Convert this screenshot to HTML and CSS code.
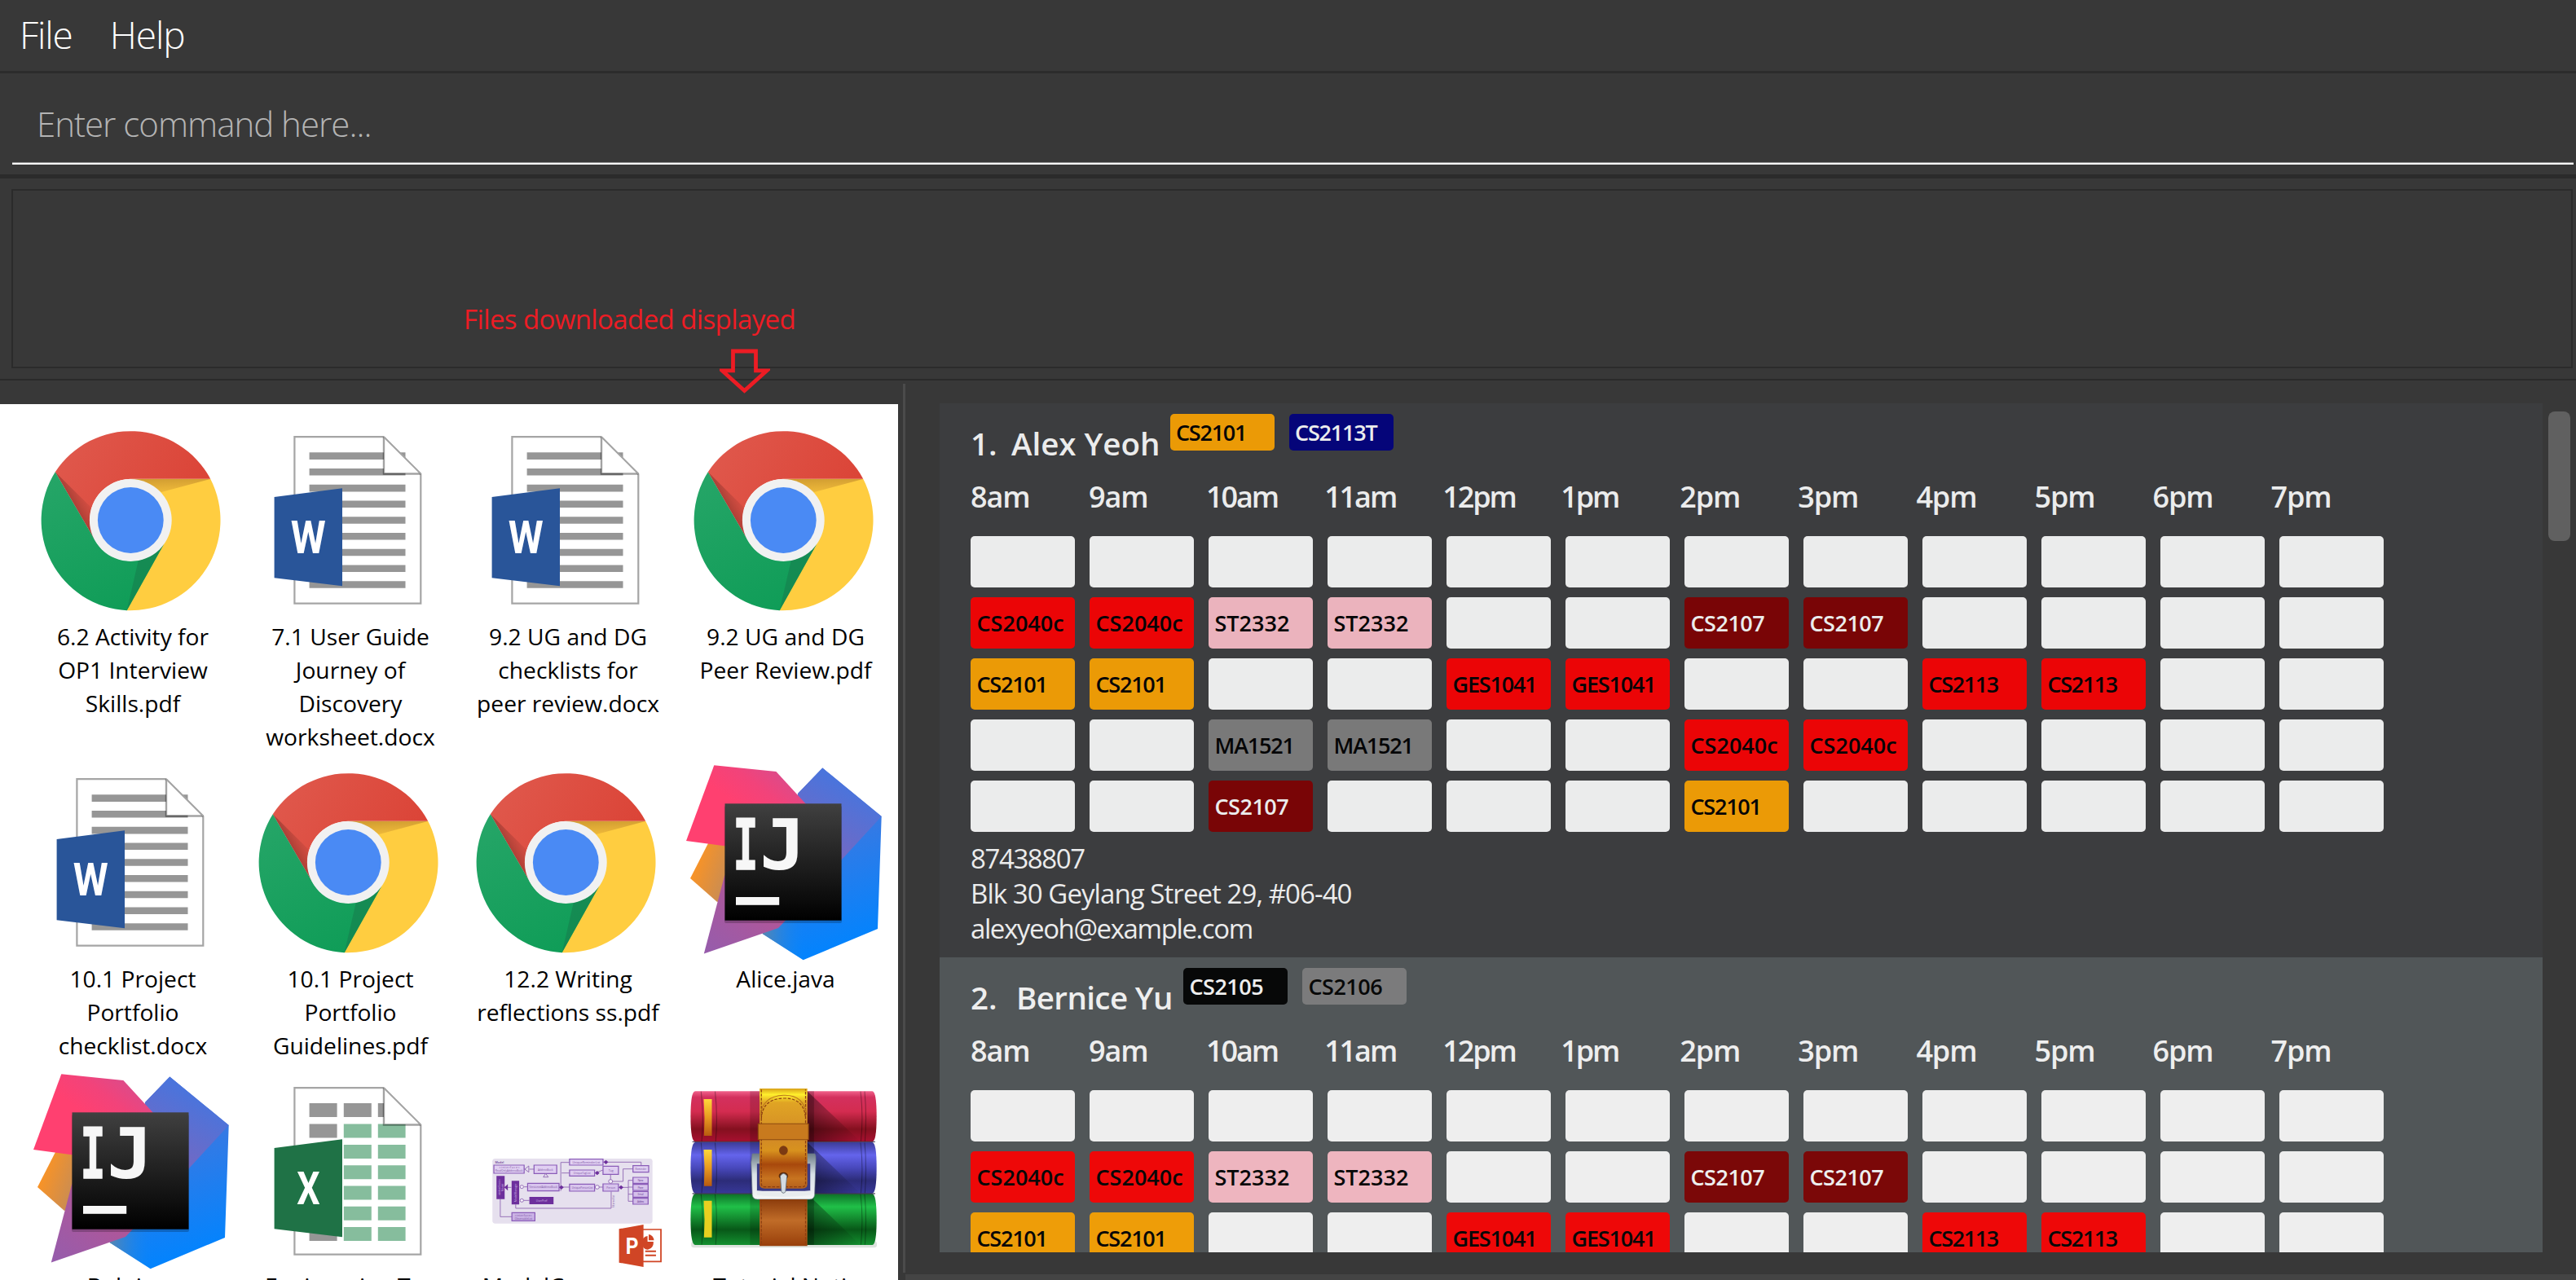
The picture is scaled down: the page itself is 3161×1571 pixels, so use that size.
FILE: index.html
```html
<!DOCTYPE html>
<html lang="en">
<head>
<meta charset="utf-8">
<title>Address Book</title>
<link rel="stylesheet" href="styles.css">
</head>
<body>
<svg class="defs" width="0" height="0" aria-hidden="true">
  <defs>
    <linearGradient id="cr-red" x1="0" y1="0" x2="1" y2="0.4"><stop offset="0" stop-color="#e05a4e"/><stop offset="1" stop-color="#db4437"/></linearGradient>
    <linearGradient id="cr-green" x1="0.2" y1="0" x2="0.6" y2="1"><stop offset="0" stop-color="#25a567"/><stop offset="1" stop-color="#109d58"/></linearGradient>
    <linearGradient id="cr-s1" x1="0" y1="0" x2="0.2" y2="1"><stop offset="0" stop-color="#bf8a2c" stop-opacity=".75"/><stop offset="1" stop-color="#e0a935" stop-opacity=".6"/></linearGradient>
    <linearGradient id="cr-s2" gradientUnits="userSpaceOnUse" x1="46" y1="102" x2="68" y2="90"><stop offset="0" stop-color="#7c2e26" stop-opacity=".65"/><stop offset="1" stop-color="#b5423a" stop-opacity=".15"/></linearGradient>
    <linearGradient id="ij-pink" x1="0.4" y1="0.5" x2="1" y2="0"><stop offset="0" stop-color="#ff4070"/><stop offset="0.35" stop-color="#f2437a"/><stop offset="1" stop-color="#c4539b"/></linearGradient>
    <linearGradient id="ij-blue" x1="0.3" y1="0" x2="0.5" y2="1"><stop offset="0" stop-color="#5670d4"/><stop offset="0.3" stop-color="#3d78e0"/><stop offset="1" stop-color="#0084ff"/></linearGradient>
    <linearGradient id="ij-violet" gradientUnits="userSpaceOnUse" x1="205" y1="30" x2="165" y2="100"><stop offset="0" stop-color="#4a74dc"/><stop offset="1" stop-color="#7169c4"/></linearGradient>
    <linearGradient id="ij-fade" gradientUnits="userSpaceOnUse" x1="93" y1="0" x2="146" y2="0"><stop offset="0" stop-color="#5a86ad"/><stop offset="1" stop-color="#0f86f6" stop-opacity="0"/></linearGradient>
    <linearGradient id="ij-orange" x1="0.2" y1="0" x2="1" y2="0.4"><stop offset="0" stop-color="#ff9420"/><stop offset="1" stop-color="#c78c55"/></linearGradient>
    <linearGradient id="ij-purple" x1="0.7" y1="0.3" x2="0.1" y2="1"><stop offset="0" stop-color="#b55595"/><stop offset="1" stop-color="#975cab"/></linearGradient>
    <linearGradient id="ij-black" x1="0" y1="0" x2="0" y2="1"><stop offset="0" stop-color="#404040"/><stop offset="1" stop-color="#000"/></linearGradient>
    <linearGradient id="rr-red" x1="0" y1="0" x2="0" y2="1"><stop offset="0" stop-color="#f0608a"/><stop offset="0.12" stop-color="#d3305e"/><stop offset="0.4" stop-color="#d42c50"/><stop offset="0.75" stop-color="#84101f"/><stop offset="1" stop-color="#a81030"/></linearGradient>
    <linearGradient id="rr-blue" x1="0" y1="0" x2="0" y2="1"><stop offset="0" stop-color="#3c3c98"/><stop offset="0.25" stop-color="#6464ec"/><stop offset="0.5" stop-color="#4848bc"/><stop offset="0.75" stop-color="#2c2c78"/><stop offset="1" stop-color="#383898"/></linearGradient>
    <linearGradient id="rr-green" x1="0" y1="0" x2="0" y2="1"><stop offset="0" stop-color="#0e7028"/><stop offset="0.25" stop-color="#20c048"/><stop offset="0.7" stop-color="#085818"/><stop offset="1" stop-color="#149030"/></linearGradient>
    <linearGradient id="rr-gold" x1="0" y1="0" x2="0" y2="1"><stop offset="0" stop-color="#ffd83a"/><stop offset="0.5" stop-color="#e89a20"/><stop offset="1" stop-color="#b85a10"/></linearGradient>
    <linearGradient id="rr-strap" x1="0" y1="0" x2="0" y2="1"><stop offset="0" stop-color="#d8a018"/><stop offset="0.06" stop-color="#fff02c"/><stop offset="0.14" stop-color="#e0a424"/><stop offset="0.5" stop-color="#d28a26"/><stop offset="0.62" stop-color="#d8921e"/><stop offset="0.76" stop-color="#a8480c"/><stop offset="0.9" stop-color="#c87420"/><stop offset="1" stop-color="#b4601c"/></linearGradient>
    <linearGradient id="rr-tail" x1="0" y1="0" x2="0" y2="1"><stop offset="0" stop-color="#8c3c0c"/><stop offset="0.45" stop-color="#c06c28"/><stop offset="1" stop-color="#983f0a"/></linearGradient>
    <linearGradient id="rr-shade" x1="0" y1="0" x2="1" y2="0"><stop offset="0" stop-color="#000" stop-opacity=".6"/><stop offset="1" stop-color="#000" stop-opacity="0"/></linearGradient>
    <linearGradient id="rr-metal" x1="0" y1="0" x2="0" y2="1"><stop offset="0" stop-color="#6c7c88"/><stop offset="0.45" stop-color="#d8e0e6"/><stop offset="1" stop-color="#f6f6f6"/></linearGradient>
    <linearGradient id="pp-box" x1="0" y1="0" x2="0" y2="1"><stop offset="0" stop-color="#e4d4f4"/><stop offset="1" stop-color="#c8b0e4"/></linearGradient>

    <symbol id="chrome" viewBox="0 0 240 240">
      <path d="M217.2 68.7A110.8 110.8 0 0 1 114.7 230.2L119.3 119.5V68.7Z" fill="#ffcd40"/>
      <path d="M26.8 60.3A110.8 110.8 0 0 1 217.2 68.7H119.3A50.6 50.6 0 0 0 75 143Z" fill="url(#cr-red)"/>
      <path d="M26.8 60.3L75 143A50.6 50.6 0 0 0 160 149L114.7 230.2A110.8 110.8 0 0 1 26.8 60.3Z" fill="url(#cr-green)"/>
      <path d="M119.3 69H217L157 85Z" fill="url(#cr-s1)"/>
      <path d="M26.8 60.3L75 143L70 103Z" fill="url(#cr-s2)"/>
      <path d="M160 149L114.7 230L129 168Z" fill="#158450" opacity=".75"/>
      <circle cx="119.3" cy="119.5" r="50.4" fill="#f1f1f1"/>
      <circle cx="119.3" cy="119.5" r="40.4" fill="#4a8af4"/>
    </symbol>

    <symbol id="page" viewBox="0 0 240 240">
      <path d="M53.4 17.2H162.5L208.3 63V221.6H53.4Z" fill="#fff" stroke="#a5a5a5" stroke-width="2.2"/>
    </symbol>
    <symbol id="fold" viewBox="0 0 240 240">
      <path d="M163 18V61.8H207Z" fill="#fff"/>
      <path d="M163 17.2V62.5H208.3" fill="none" stroke="#000" stroke-opacity=".36" stroke-width="2.4"/>
      <path d="M163 17.2L208.3 62.5" stroke="#a5a5a5" stroke-width="2"/>
    </symbol>

    <symbol id="word" viewBox="0 0 240 240">
      <use href="#page"/>
      <path d="M71.6 40.6H189.5M71.6 60.3H189.5M71.6 80.1H189.5M71.6 99.8H189.5M71.6 119.5H189.5M71.6 139.2H189.5M71.6 159H189.5M71.6 178.7H189.5M71.6 198.5H189.5" stroke="#969696" stroke-width="8.6"/>
      <use href="#fold"/>
      <path d="M28.6 91L112 80.2V200.3L28.6 190.2Z" fill="#295599"/>
      <text x="48.8" y="160.3" class="badge" textLength="43" lengthAdjust="spacingAndGlyphs">W</text>
    </symbol>

    <symbol id="excel" viewBox="0 0 240 240">
      <use href="#page"/>
      <path d="M71.6 44.5H105.6M113.8 44.5H147.8M155.8 44.5H163M71.6 70H105.6M71.6 196.5H105.6" stroke="#969696" stroke-width="17"/>
      <path d="M113.8 70H147.8M155.8 70H189.6M113.8 95.4H147.8M155.8 95.4H189.6M113.8 120.7H147.8M155.8 120.7H189.6M113.8 146H147.8M155.8 146H189.6M113.8 171.3H147.8M155.8 171.3H189.6M113.8 196.5H147.8M155.8 196.5H189.6" stroke="#86bd9d" stroke-width="17"/>
      <use href="#fold"/>
      <path d="M28.6 91L112 80.2V200.3L28.6 190.2Z" fill="#1f7246"/>
      <text x="56.2" y="160.3" class="badge" textLength="28.4" lengthAdjust="spacingAndGlyphs">X</text>
    </symbol>

    <symbol id="intellij" viewBox="0 0 240 240">
      <path d="M27 96L5 139L38 168L60 160V90Z" fill="url(#ij-orange)"/>
      <path d="M167.3 3.5L239.7 63L235 201L143.6 239.2L93.6 207L120 120L137 35Z" fill="url(#ij-blue)"/>
      <path d="M93.6 207L143.6 239.2V180H110Z" fill="url(#ij-fade)"/>
      <path d="M167.3 3.5L239.7 63L190 117L137 90V35Z" fill="url(#ij-violet)"/>
      <path d="M47 136L21.8 231.5L113 200L135 177L60 120Z" fill="url(#ij-purple)"/>
      <path d="M34.3 .2L110.4 8L160 62L60 101L0 93Z" fill="url(#ij-pink)"/>
      <rect x="47" y="50" width="144" height="144" rx="2" fill="#000" opacity=".22"/>
      <rect x="47.5" y="47.3" width="143" height="143.4" fill="url(#ij-black)"/>
      <text x="57.5" y="128.3" class="mono mono-bold" textLength="31" lengthAdjust="spacingAndGlyphs">I</text>
      <text x="90" y="128.3" class="mono" textLength="57" lengthAdjust="spacingAndGlyphs">J</text>
      <rect x="61" y="162" width="53.2" height="9.8" fill="#f7f7f7"/>
    </symbol>

    <symbol id="slides" viewBox="0 0 240 240">
      <g transform="translate(-15.4 -18) scale(.35714 .33333)">
        <rect x="125" y="366" width="550" height="239" rx="10" fill="#e6e0ee"/>
        <g fill="none" stroke="#8a60b0" stroke-width="2.5">
          <path d="M252 405H268M308 390V432M234 470H246M354 471H390M360 485V380H390M363 419H390M478 471H505M560 472H592M505 379H636V390M478 419L505 408M531 425V450M531 450H574V404H608M205 535V549H533V487M152 515V580H192M224 520H252M592 446V523M592 446H608M592 471H608M592 497H608M592 523H608M165 472H190"/>
        </g>
        <g fill="url(#pp-box)" stroke="#8a5cb8" stroke-width="3.5">
          <path d="M130 390H234V420H130ZM268 390H346V421H268ZM390 368H505V390H390ZM390 408H476V430H390ZM505 394H558V424H505ZM608 392H662V416H608ZM246 457H354V485H246ZM390 460H476V486H390ZM505 459H558V486H505ZM608 435H660V457H608ZM608 461H660V483H608ZM608 487H660V508H608ZM608 512H660V534H608ZM192 565H271V595H192Z"/>
        </g>
        <path d="M139 430H167V515H139ZM191 448H217V535H191ZM252 507H335V534H252ZM166 472L178 460V484ZM354 472L362 464L370 472L362 480ZM507 379L515 371L523 379L515 387ZM477 419L485 411L493 419L485 427ZM559 472L567 464L575 472L567 480Z" fill="#6d2f9c"/>
        <path d="M236 405L250 393V416ZM300 434L308 421L317 434Z" fill="#e6e0ee" stroke="#8a60b0" stroke-width="2.5"/>
        <g fill="#f4effa" stroke="#8a60b0" stroke-width="2.5"><circle cx="226" cy="470" r="6"/><circle cx="226" cy="520" r="6"/><circle cx="485" cy="471" r="7"/><circle cx="531" cy="450" r="7"/></g>
        <g class="diagram">
          <text x="134" y="383" font-weight="700">Model</text>
          <text x="148" y="402" textLength="70">«interface»</text>
          <text x="135" y="415" textLength="94" lengthAdjust="spacingAndGlyphs">ReadOnlyAddressBook</text>
          <text x="281" y="410" textLength="52" lengthAdjust="spacingAndGlyphs">AddressBook</text>
          <text x="400" y="383" textLength="95" lengthAdjust="spacingAndGlyphs">UniqueReminderList</text>
          <text x="404" y="423" textLength="58" lengthAdjust="spacingAndGlyphs">UniqueTagList</text>
          <text x="524" y="413">Tag</text>
          <text x="252" y="475" textLength="96" lengthAdjust="spacingAndGlyphs">VersionedAddressBook</text>
          <text x="398" y="476" textLength="72" lengthAdjust="spacingAndGlyphs">UniquePersonList</text>
          <text x="517" y="476" textLength="30" lengthAdjust="spacingAndGlyphs">Person</text>
          <text x="202" y="578" textLength="58">«interface»</text>
          <text x="202" y="590" textLength="60" lengthAdjust="spacingAndGlyphs">ObservableList</text>
          <text x="616" y="408" textLength="38" lengthAdjust="spacingAndGlyphs">Reminder</text>
          <text x="624" y="450" textLength="20">Name</text><text x="624" y="476" textLength="20">Phone</text><text x="624" y="501" textLength="20">Email</text><text x="622" y="527" textLength="24">Address</text>
          <text x="275" y="524" textLength="38" lengthAdjust="spacingAndGlyphs" fill="#cdb6e4">UserPref</text>
          <text transform="translate(208 525) rotate(-90)" textLength="68" lengthAdjust="spacingAndGlyphs" fill="#cdb6e4">ModelManager</text>
          <text transform="translate(152 502) rotate(-90)" textLength="60" lengthAdjust="spacingAndGlyphs" fill="#cdb6e4">«interface»</text>
          <text transform="translate(163 486) rotate(-90)" textLength="28" lengthAdjust="spacingAndGlyphs" fill="#cdb6e4">Model</text>
          <text transform="translate(545 546) rotate(-90)" textLength="46" lengthAdjust="spacingAndGlyphs">filtered list</text>
        </g>
        <path d="M640 627H704V745H640" fill="#fff" stroke="#d04525" stroke-width="5"/>
        <path d="M650 707H687M650 722H687" stroke="#d04525" stroke-width="6"/>
        <path d="M658 651V672H678A20 25 0 1 1 658 651Z" fill="#d04525"/><path d="M662 645A20 22 0 0 1 680 667H662Z" fill="#d04525"/>
        <path d="M560 625L644 609V765L560 749Z" fill="#d04525"/>
        <text x="583" y="717" class="slides-badge" textLength="44" lengthAdjust="spacingAndGlyphs">P</text>
      </g>
    </symbol>

    <symbol id="archive" viewBox="0 0 240 240">
      <g transform="translate(-282.4 -18) scale(.35714 .33333)">
        <rect x="808" y="670" width="638" height="24" rx="10" fill="#9fb0a0" opacity=".35"/>
        <path d="M822 118H1430Q1445 118 1445 211T1430 304H822Q806 304 806 211T822 118Z" fill="url(#rr-red)"/>
        <path d="M822 306H1430Q1445 306 1445 400T1430 494H822Q806 494 806 400T822 306Z" fill="url(#rr-blue)"/>
        <path d="M822 496H1430Q1445 496 1445 590T1430 684H822Q806 684 806 590T822 496Z" fill="url(#rr-green)"/>
        <path d="M812 304H1440M812 495H1440" stroke="#14102c" stroke-width="4" opacity=".7"/>
        <path d="M842 119Q852 211 844 303M890 119Q900 211 892 303M1390 119Q1400 211 1391 303M1404 119Q1412 211 1405 303M842 307Q852 400 844 493M890 307Q900 400 892 493M1390 307Q1400 400 1391 493M1404 307Q1412 400 1405 493M842 497Q852 590 844 683M890 497Q900 590 892 683M1390 497Q1400 590 1391 683M1404 497Q1412 590 1405 683" fill="none" stroke="#000" stroke-width="3" opacity=".32"/>
        <path d="M1207 118L1390 304H1207ZM1207 306L1390 494H1207ZM1207 496L1390 684H1207Z" fill="url(#rr-shade)" opacity=".7"/>
        <rect x="1010" y="118" width="34" height="566" fill="#000" opacity=".14"/>
        <rect x="1206" y="118" width="24" height="566" fill="#000" opacity=".22"/>
        <path d="M851 147H879V282H852Q856 215 851 147Z" fill="url(#rr-gold)"/>
        <path d="M851 333H879V467H852Q856 400 851 333Z" fill="url(#rr-gold)"/>
        <path d="M851 521H879V656H852Q856 590 851 521Z" fill="#e8d020"/>
        <path d="M1018 348H1232Q1237 348 1236 380L1232 500Q1230 516 1214 516H1036Q1020 516 1018 500L1014 380Z" fill="url(#rr-metal)" stroke="#6a7884" stroke-width="2"/>
        <path d="M1034 385H1217V485H1034Z" fill="#3a3a84"/>
        <path d="M1043 516H1207V688H1043Z" fill="url(#rr-tail)"/>
        <path d="M1043 108H1207V460Q1207 476 1190 476H1060Q1043 476 1043 460Z" fill="url(#rr-strap)"/>
        <path d="M1049 112V460Q1050 470 1062 470H1190Q1201 470 1201 458V112M1049 520V686M1201 520V686M1049 220Q1052 146 1125 144T1201 220" fill="none" stroke="#8c3e10" stroke-width="3.5" stroke-dasharray="10 5"/>
        <path d="M1045 206Q1055 136 1125 133T1205 206" fill="none" stroke="#b8741c" stroke-width="3"/>
        <path d="M1038 238H1211V296H1038Z" fill="#c87a1e" stroke="#8c4a10" stroke-width="3"/>
        <ellipse cx="1125" cy="336" rx="15" ry="17" fill="#7c3a12"/>
        <ellipse cx="1125" cy="430" rx="16" ry="14" fill="#5c2a0c"/>
        <path d="M1034 484Q1125 498 1217 484V500Q1125 512 1034 500Z" fill="#e8ecee"/>
        <path d="M1114 430Q1125 412 1137 430L1132 488Q1125 498 1118 488Z" fill="#d4dce2" stroke="#5f6b76" stroke-width="2.5"/>
      </g>
    </symbol>
  </defs>
</svg>

<div class="app">
  <nav class="menu"><span>File</span><span>Help</span></nav>
  <div class="command"><div class="command-field">Enter command here...</div></div>
  <div class="result"><div class="result-box"></div></div>

  <main class="main">
    <section class="files">
      <figure class="file"><svg class="file-icon"><use href="#chrome"/></svg><figcaption>6.2 Activity for<br>OP1 Interview<br>Skills.pdf</figcaption></figure>
      <figure class="file"><svg class="file-icon"><use href="#word"/></svg><figcaption>7.1 User Guide<br>Journey of<br>Discovery<br>worksheet.docx</figcaption></figure>
      <figure class="file"><svg class="file-icon"><use href="#word"/></svg><figcaption>9.2 UG and DG<br>checklists for<br>peer review.docx</figcaption></figure>
      <figure class="file"><svg class="file-icon"><use href="#chrome"/></svg><figcaption>9.2 UG and DG<br>Peer Review.pdf</figcaption></figure>
      <figure class="file"><svg class="file-icon"><use href="#word"/></svg><figcaption>10.1 Project<br>Portfolio<br>checklist.docx</figcaption></figure>
      <figure class="file"><svg class="file-icon"><use href="#chrome"/></svg><figcaption>10.1 Project<br>Portfolio<br>Guidelines.pdf</figcaption></figure>
      <figure class="file"><svg class="file-icon"><use href="#chrome"/></svg><figcaption>12.2 Writing<br>reflections ss.pdf</figcaption></figure>
      <figure class="file"><svg class="file-icon"><use href="#intellij"/></svg><figcaption>Alice.java</figcaption></figure>
      <figure class="file file-last"><svg class="file-icon"><use href="#intellij"/></svg><figcaption>Bob.java</figcaption></figure>
      <figure class="file file-last"><svg class="file-icon"><use href="#excel"/></svg><figcaption>Engineering Tea</figcaption></figure>
      <figure class="file file-last"><svg class="file-icon"><use href="#slides"/></svg><figcaption>ModelCompone</figcaption></figure>
      <figure class="file file-last"><svg class="file-icon"><use href="#archive"/></svg><figcaption>Tutorial Notic</figcaption></figure>
    </section>
    <div class="divider"></div>
    <section class="people">
      <div class="list">
        <article class="card">
          <header class="card-head"><span class="index">1.</span><h2>Alex Yeoh</h2><span class="tag cs2101">CS2101</span><span class="tag cs2113t">CS2113T</span></header>
          <div class="hours"><span>8am</span><span>9am</span><span class="ten">10am</span><span class="ten">11am</span><span class="ten">12pm</span><span class="ten">1pm</span><span>2pm</span><span>3pm</span><span>4pm</span><span>5pm</span><span>6pm</span><span>7pm</span></div>
          <div class="slots">
            <i></i><i></i><i></i><i></i><i></i><i></i><i></i><i></i><i></i><i></i><i></i><i></i>
            <i class="cs2040c">CS2040c</i><i class="cs2040c">CS2040c</i><i class="st2332">ST2332</i><i class="st2332">ST2332</i><i></i><i></i><i class="cs2107">CS2107</i><i class="cs2107">CS2107</i><i></i><i></i><i></i><i></i>
            <i class="cs2101">CS2101</i><i class="cs2101">CS2101</i><i></i><i></i><i class="ges1041">GES1041</i><i class="ges1041">GES1041</i><i></i><i></i><i class="cs2113">CS2113</i><i class="cs2113">CS2113</i><i></i><i></i>
            <i></i><i></i><i class="ma1521">MA1521</i><i class="ma1521">MA1521</i><i></i><i></i><i class="cs2040c">CS2040c</i><i class="cs2040c">CS2040c</i><i></i><i></i><i></i><i></i>
            <i></i><i></i><i class="cs2107">CS2107</i><i></i><i></i><i></i><i class="cs2101">CS2101</i><i></i><i></i><i></i><i></i><i></i>
          </div>
          <div class="details"><p class="phone">87438807</p><p class="address">Blk 30 Geylang Street 29, #06-40</p><p class="email">alexyeoh@example.com</p></div>
        </article>
        <article class="card card-alt">
          <header class="card-head"><span class="index">2.</span><h2>Bernice Yu</h2><span class="tag cs2105">CS2105</span><span class="tag cs2106">CS2106</span></header>
          <div class="hours"><span>8am</span><span>9am</span><span class="ten">10am</span><span class="ten">11am</span><span class="ten">12pm</span><span class="ten">1pm</span><span>2pm</span><span>3pm</span><span>4pm</span><span>5pm</span><span>6pm</span><span>7pm</span></div>
          <div class="slots">
            <i></i><i></i><i></i><i></i><i></i><i></i><i></i><i></i><i></i><i></i><i></i><i></i>
            <i class="cs2040c">CS2040c</i><i class="cs2040c">CS2040c</i><i class="st2332">ST2332</i><i class="st2332">ST2332</i><i></i><i></i><i class="cs2107">CS2107</i><i class="cs2107">CS2107</i><i></i><i></i><i></i><i></i>
            <i class="cs2101">CS2101</i><i class="cs2101">CS2101</i><i></i><i></i><i class="ges1041">GES1041</i><i class="ges1041">GES1041</i><i></i><i></i><i class="cs2113">CS2113</i><i class="cs2113">CS2113</i><i></i><i></i>
          </div>
        </article>
      </div>
      <div class="scrollbar"><div class="thumb"></div></div>
    </section>
  </main>

  <div class="note">
    <span>Files downloaded displayed</span>
    <svg class="note-arrow" viewBox="0 0 62 56"><path d="M16.5 3H44.5V26.8H58L30.5 51.5L3 26.8H16.5Z" fill="none" stroke="#ed1c24" stroke-width="4.8"/></svg>
  </div>
</div>
</body>
</html>
```
FILE: styles.css
```css
* { box-sizing: border-box; }

body {
  margin: 0;
  background: #383838;
  font-family: "Open Sans", "Noto Sans", sans-serif;
}

h2, p, figure { margin: 0; }
i { font-style: normal; }
.defs { position: absolute; }

.app {
  position: relative;
  display: flex;
  flex-direction: column;
  width: 3161px;
  height: 1571px;
  overflow: hidden;
}

/* Menu and command line */
.menu {
  display: flex;
  gap: 46px;
  height: 90px;
  padding-left: 24px;
  border-bottom: 3px solid #2c2c2c;
  color: #fff;
  font-size: 46px;
  font-weight: 300;
  line-height: 84px;
  letter-spacing: -1.1px;
}

.command {
  height: 129px;
  padding: 0 3px 0 15px;
  border-bottom: 5px solid #2b2b2b;
}

.command-field {
  height: 112px;
  padding: 14px 0 0 30px;
  border-bottom: 2px solid #fff;
  box-shadow: inset 0 -1px 0 #8c8c8c;
  color: #b4b4b4;
  font-size: 42px;
  font-weight: 300;
  line-height: 96px;
  letter-spacing: -1px;
}

.result {
  height: 248px;
  padding: 13px 4px 13px 14px;
  border-bottom: 2px solid #2a2a2a;
}

.result-box {
  height: 220px;
  border: 2px solid #2b2b2b;
}

/* Downloaded files */
.main {
  display: flex;
  flex: 1;
  min-height: 0;
}

.files {
  display: grid;
  grid-template-columns: repeat(4, 267px);
  grid-template-rows: 420.3px 378.7px 378.7px;
  width: 1102px;
  margin-top: 29px;
  padding: 23px 0 0 29.5px;
  background: #fff;
  overflow: hidden;
}

.file { text-align: center; }

.file-icon {
  display: block;
  width: 240px;
  height: 240px;
  margin: 0 auto 0 11.9px;
}

figcaption {
  padding-top: 2px;
  color: #000;
  font-size: 28.2px;
  line-height: 41px;
  white-space: nowrap;
}

.file-last figcaption { padding-top: 0; }

.badge {
  fill: #fff;
  font: 700 55.5px Roboto, sans-serif;
}

.slides-badge {
  fill: #fff;
  font: 700 82px Roboto, sans-serif;
}

.mono {
  fill: #f7f7f7;
  font: 700 85px "DejaVu Sans Mono", monospace;
}

.mono-bold {
  stroke: #f7f7f7;
  stroke-width: 1.5px;
}

.diagram {
  fill: #7d55a5;
  font: 10px "Open Sans", sans-serif;
}

.divider {
  width: 3px;
  margin: 4px 0 9px 6px;
  background: #4b4b4b;
}

/* Contact list */
.people {
  display: flex;
  flex: 1;
  padding: 28px 0 27px 42px;
  border-bottom: 7px solid #444;
}

.list {
  width: 1967px;
  height: 1042px;
  overflow: hidden;
}

.card {
  height: 680px;
  padding-left: 38px;
  background: #3c3d3f;
  color: #fff;
}

.card-alt { background: #515658; }

.card-head, .hours, .slots, .details { opacity: .9; }

.card-head {
  display: flex;
  height: 98px;
  font-size: 38.5px;
  font-weight: 600;
  line-height: 98px;
}

.index { width: 50px; }
.card-alt .index { width: 56px; }

h2 {
  margin-right: 12px;
  font-size: inherit;
  font-weight: 600;
}

.card-alt h2 {
  margin-right: 13px;
  letter-spacing: -.6px;
}

.tag, .slots i {
  width: 128px;
  padding-left: 7.5px;
  border-radius: 5px;
  font-size: 27px;
  font-weight: 600;
}

.tag {
  height: 45px;
  margin: 13px 18px 0 0;
  line-height: 45px;
}

.hours {
  display: grid;
  grid-template-columns: repeat(12, 145.06px);
  margin-top: 1px;
  font-size: 36px;
  font-weight: 600;
  line-height: 32px;
  letter-spacing: -1.1px;
}

.hours .ten {
  margin-left: -1px;
  letter-spacing: -2.1px;
}

.slots {
  display: grid;
  grid-template-columns: repeat(12, 128px);
  grid-auto-rows: 63px;
  gap: 12px 18px;
  margin-top: 32px;
}

.slots i {
  background: #fff;
  line-height: 63px;
}

.slots .cs2040c { background: #ff0000; color: #000; }
.slots .ges1041, .slots .cs2113 { background: #ff0000; color: #000; }
.slots .st2332 { background: #ffc0cb; color: #000; }
.slots .ma1521 { background: #808080; color: #000; }
.slots .cs2107 { background: #800000; }
.slots .cs2101, .tag.cs2101 { background: #ffa500; color: #000; }
.tag.cs2113t { background: #000080; }
.tag.cs2105 { background: #000; }
.tag.cs2106 { background: #808080; color: #000; }

.cs2101 { letter-spacing: -1.25px; }
.cs2105, .cs2106, .cs2107 { letter-spacing: -.5px; }
.cs2113 { letter-spacing: -1.4px; }
.cs2113t, .ma1521 { letter-spacing: -1.2px; }
.ges1041 { letter-spacing: -1.2px; }

.details {
  padding-top: 11px;
  font-size: 33px;
  line-height: 43.2px;
}

.phone { letter-spacing: -1.4px; }
.address { letter-spacing: -.93px; }
.email { letter-spacing: -1.4px; }

.scrollbar { padding: 10px 0 0 7px; }

.thumb {
  width: 27px;
  height: 159px;
  border-radius: 8px;
  background: #606060;
}

/* Annotation over the window */
.note {
  position: absolute;
  left: 569px;
  top: 368px;
  display: flex;
  flex-direction: column;
  color: #ed1c24;
  font-size: 33px;
  line-height: 47px;
  letter-spacing: -.6px;
}

.note-arrow {
  width: 62px;
  height: 56px;
  margin: 13px 0 0 314px;
}
```
